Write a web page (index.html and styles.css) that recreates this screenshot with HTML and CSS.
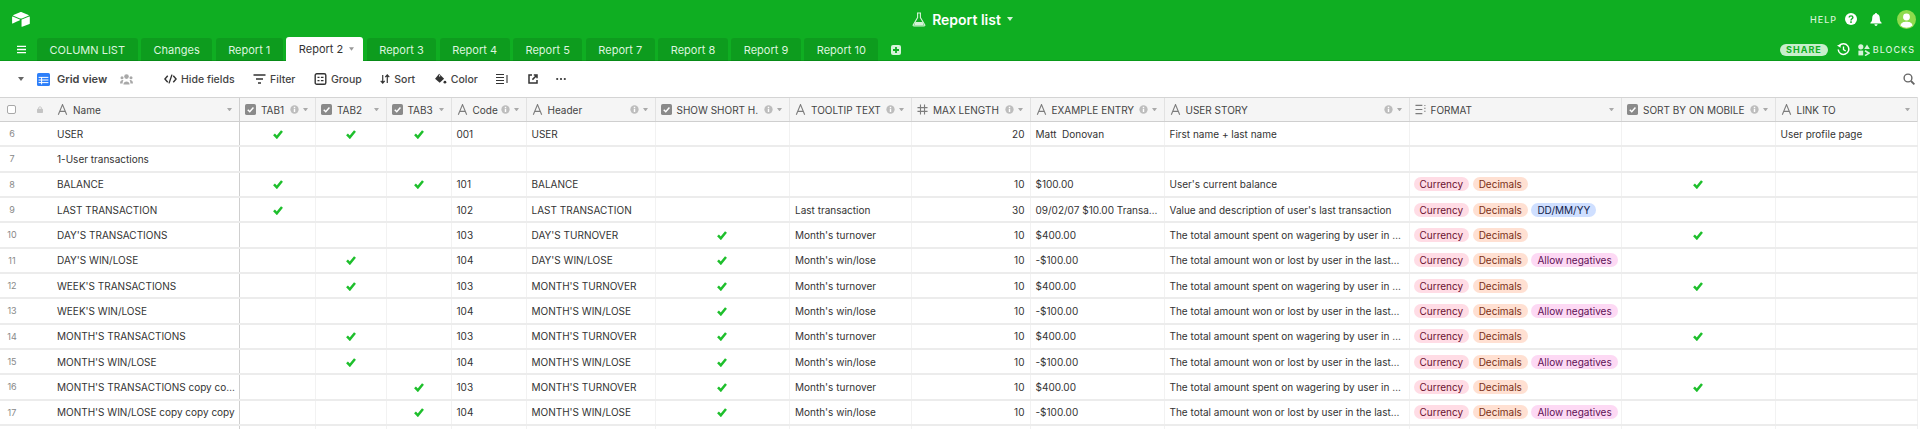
FILE: index.html
```html
<!DOCTYPE html>
<html lang="en">
<head>
    <meta charset="UTF-8">
    <title>Report list</title>
    <link rel="stylesheet" href="styles.css">
</head>
<body>
    <!-- shared icons -->
    <svg class="sprite" xmlns="http://www.w3.org/2000/svg">
        <symbol id="i-check" viewBox="0 0 12 12"><path d="M1.2 6.4 L4.6 10 L10.8 2.4" fill="none" stroke="currentColor" stroke-width="3"/></symbol>
        <symbol id="i-box" viewBox="0 0 12 12"><rect width="12" height="12" rx="2" fill="#8a8a8a"/><path d="M3 6.2 L5.2 8.4 L9.2 3.8" fill="none" stroke="#fff" stroke-width="1.6"/></symbol>
        <symbol id="i-a" viewBox="0 0 10 11"><path d="M.8 10.8 L5 .6 L9.2 10.8 M2.3 7.4 H7.7" fill="none" stroke="#7d7d7d" stroke-width="1.1"/></symbol>
        <symbol id="i-hash" viewBox="0 0 12 12"><path d="M3.8 .5 V11.5 M8.2 .5 V11.5 M.5 4 H11.5 M.5 8 H11.5" fill="none" stroke="#7d7d7d" stroke-width="1.2"/></symbol>
        <symbol id="i-list" viewBox="0 0 12 12"><path d="M.5 1.5 H8 M.5 6 H8 M.5 10.5 H8" fill="none" stroke="#7d7d7d" stroke-width="1.1"/><path d="M10 1 h1.5 v1 h-1.5 Z M10 4.2 h1.5 v1 h-1.5 Z M10 7.4 h1.5 v1 h-1.5 Z" fill="#7d7d7d"/></symbol>
        <symbol id="i-info" viewBox="0 0 10 10"><circle cx="5" cy="5" r="4.6" fill="#bdbdbd"/><rect x="4.2" y="4.2" width="1.6" height="3.6" fill="#fff"/><rect x="4.2" y="2" width="1.6" height="1.5" fill="#fff"/></symbol>
        <symbol id="i-caret" viewBox="0 0 6 4"><path d="M0 0 H6 L3 4 Z" fill="currentColor"/></symbol>
    </svg>

    <header class="topbar">
        <svg class="logo" viewBox="10 10 180 150"><path fill="#fff" d="M90 12.4 24.1 39.7c-3.7 1.5-3.6 6.7.1 8.2l66.2 26.2c5.8 2.3 12.3 2.3 18.1 0l66.3-26.2c3.7-1.5 3.7-6.7.1-8.2L108.9 12.4c-6-2.5-12.8-2.5-18.9 0"/><path fill="#fff" d="M105.3 88.5v65.6c0 3.1 3.1 5.2 6 4.1l73.9-28.6c1.7-.7 2.8-2.3 2.8-4.1V59.8c0-3.1-3.1-5.3-6-4.1l-73.9 28.6c-1.7.7-2.8 2.3-2.8 4.2"/><path fill="#fff" d="M88.1 91.8 66.2 102.4l-2.2 1.1-46.3 22.2c-2.9 1.4-6.7-.7-6.7-4V60.1c0-1.2.6-2.2 1.4-3 .3-.3.7-.6 1.1-.8 1.1-.7 2.7-.8 4-.3l70.2 27.8c3.5 1.4 3.8 6.4.4 8"/></svg>
        <div class="title">
            <svg class="flask" viewBox="0 0 14 15"><path d="M5 1 H9 M5.6 1 V5.5 L1.2 13 Q.9 14 2 14 H12 Q13.1 14 12.8 13 L8.4 5.5 V1" fill="none" stroke="#d6f3d9" stroke-width="1.1"/><path d="M3.4 10 H10.6 L12 13.4 H2 Z" fill="#d6f3d9"/></svg>
            <span>Report list</span>
            <svg class="caret-white"><use href="#i-caret"/></svg>
        </div>
        <div class="account">
            <span class="caps">HELP</span>
            <svg class="help" viewBox="0 0 12 12"><circle cx="6" cy="6" r="6" fill="#fff"/><path d="M4.2 4.6 C4.2 2.3 7.9 2.4 7.9 4.5 C7.9 5.8 6 5.8 6 7.4" fill="none" stroke="#0fae22" stroke-width="1.4"/><rect x="5.2" y="8.3" width="1.6" height="1.6" fill="#0fae22"/></svg>
            <svg class="bell" viewBox="0 0 12 13"><path fill="#fff" d="M6 0 C6.7 0 7 .5 7 1 C9 1.5 9.8 3.2 9.8 5.2 C9.8 7.8 10.6 8.8 11.6 9.8 V10.6 H.4 V9.8 C1.4 8.8 2.2 7.8 2.2 5.2 C2.2 3.2 3 1.5 5 1 C5 .5 5.3 0 6 0 Z M4.4 11.3 H7.6 C7.4 12.4 6.8 13 6 13 C5.2 13 4.6 12.4 4.4 11.3 Z"/></svg>
            <svg class="avatar" viewBox="0 0 20 20"><circle cx="10" cy="10" r="10" fill="#8edb4c"/><circle cx="10" cy="7.4" r="3.6" fill="#fff"/><path fill="#fff" d="M3.6 16.4 C4.4 13 7 12.4 10 12.4 C13 12.4 15.6 13 16.4 16.4 A10 10 0 0 1 3.6 16.4 Z"/></svg>
        </div>
    </header>

    <nav class="tabbar">
        <svg class="menu" viewBox="0 0 10 9"><path d="M0 1 H10 M0 4.5 H10 M0 8 H10" stroke="#fff" stroke-width="1.4"/></svg>
        <a class="tab">COLUMN LIST</a>
        <a class="tab">Changes</a>
        <a class="tab">Report 1</a>
        <a class="tab active">Report 2 <svg class="caret-tab"><use href="#i-caret"/></svg></a>
        <a class="tab">Report 3</a>
        <a class="tab">Report 4</a>
        <a class="tab">Report 5</a>
        <a class="tab">Report 7</a>
        <a class="tab">Report 8</a>
        <a class="tab">Report 9</a>
        <a class="tab">Report 10</a>
        <svg class="add" viewBox="0 0 10 10"><rect width="10" height="10" rx="2" fill="#d6f3d9"/><path d="M5 2 V8 M2 5 H8" stroke="#0fae22" stroke-width="1.8"/></svg>
        <div class="tab-tools">
            <span class="share">SHARE</span>
            <svg class="history" viewBox="0 0 14 14"><path d="M2.4 3.2 A5.7 5.7 0 1 1 1.3 7" fill="none" stroke="#fff" stroke-width="1.6"/><path d="M0 2.6 L3.8 1.4 L3.9 5.2 Z" fill="#fff"/><path d="M7 3.8 V7.2 L9.4 8.6" fill="none" stroke="#fff" stroke-width="1.4"/></svg>
            <svg class="blocks" viewBox="0 0 12 12"><circle cx="2.8" cy="2.8" r="2.6" fill="#d6f3d9"/><path d="M9 .4 L11.8 5 H6.2 Z" fill="#d6f3d9"/><rect x=".4" y="6.6" width="4.8" height="4.8" fill="#d6f3d9"/><path d="M7 6.8 L11 9.2 L7 11.6" fill="none" stroke="#d6f3d9" stroke-width="1.6"/></svg>
            <span class="caps">BLOCKS</span>
        </div>
    </nav>

    <div class="toolbar">
        <svg class="view-caret"><use href="#i-caret"/></svg>
        <svg class="grid-icon" viewBox="0 0 13 13"><rect width="13" height="13" rx="1.6" fill="#2d7ff9"/><path d="M1.6 4.4 H11.4 M1.6 7 H11.4 M1.6 9.6 H11.4 M4.6 4 V11.4" stroke="#fff" stroke-width="1"/></svg>
        <b class="view-name">Grid view</b>
        <svg class="people" viewBox="0 0 13 11"><g fill="#a8a8a8"><circle cx="6.5" cy="2.6" r="2.3"/><circle cx="2" cy="3.8" r="1.5"/><circle cx="11" cy="3.8" r="1.5"/><path d="M3.4 10.6 C3.4 6.4 9.6 6.4 9.6 10.6 Z"/><path d="M0 9.4 C0 6.4 2.4 5.8 3.4 6.2 C2.8 7.2 2.6 8.2 2.6 9.4 Z M13 9.4 C13 6.4 10.6 5.8 9.6 6.2 C10.2 7.2 10.4 8.2 10.4 9.4 Z"/></g></svg>
        <div class="actions">
            <span class="action"><svg class="act-icon wide" viewBox="0 0 14 11"><path d="M4 2 L1 5.5 L4 9 M10 2 L13 5.5 L10 9 M8.6 .8 L5.4 10.2" fill="none" stroke="#333" stroke-width="1.5"/></svg>Hide fields</span>
            <span class="action"><svg class="act-icon wide" viewBox="0 0 13 10"><path d="M.5 1 H12.5 M3 5 H10 M5 9 H8" stroke="#333" stroke-width="1.7"/></svg>Filter</span>
            <span class="action"><svg class="act-icon wide" viewBox="0 0 12 12"><rect x=".7" y=".7" width="10.6" height="10.6" rx="1.6" fill="none" stroke="#333" stroke-width="1.4"/><path d="M3 4.4 H5 M6.4 4.4 H9 M3 7.6 H5 M6.4 7.6 H9" stroke="#333" stroke-width="1.4"/></svg>Group</span>
            <span class="action"><svg class="act-icon" viewBox="0 0 11 11"><path d="M3 1 V10 M.8 7.6 L3 10 L5.2 7.6 M8 10 V1 M5.8 3.4 L8 1 L10.2 3.4" fill="none" stroke="#333" stroke-width="1.3"/></svg>Sort</span>
            <span class="action"><svg class="act-icon wide" viewBox="0 0 13 13"><path d="M5 .8 L10.4 6.2 L5.6 10.6 L.6 6.2 Z" fill="#333"/><path d="M5.6 2 V4" stroke="#fff" stroke-width="1"/><circle cx="11.3" cy="10" r="1.5" fill="#333"/></svg>Color</span>
            <span class="action"><svg class="act-icon wide" viewBox="0 0 13 11"><path d="M0 1 H8 M0 4 H8 M0 7 H8 M0 10 H8 M11 1.5 V9.5" stroke="#333" stroke-width="1.1"/></svg></span>
            <span class="action"><svg class="act-icon" viewBox="0 0 10 10"><path d="M4 1 H1 V9 H9 V6" fill="none" stroke="#333" stroke-width="1.5"/><path d="M4.4 5.6 L8 2 M5.8 1 H9 V4.2" fill="none" stroke="#333" stroke-width="1.5"/></svg></span>
            <span class="action"><svg class="act-icon" viewBox="0 0 10 3"><circle cx="1.2" cy="1.5" r="1.1" fill="#333"/><circle cx="5" cy="1.5" r="1.1" fill="#333"/><circle cx="8.8" cy="1.5" r="1.1" fill="#333"/></svg></span>
        </div>
        <svg class="search" viewBox="0 0 12 12"><circle cx="5" cy="5" r="3.9" fill="none" stroke="#666" stroke-width="1.4"/><path d="M8 8 L11.4 11.4" stroke="#666" stroke-width="1.8"/></svg>
    </div>

    <div class="row head">
        <div class="cell name"><span class="tick-box"></span><svg class="lock" viewBox="0 0 7 8"><rect y="3.2" width="7" height="4.8" rx=".8" fill="#c4c4c4"/><path d="M1.8 3.4 V2.2 C1.8 .4 5.2 .4 5.2 2.2 V3.4" fill="none" stroke="#c4c4c4"/></svg><svg class="type"><use href="#i-a"/></svg><span class="label">Name</span><svg class="caret"><use href="#i-caret"/></svg></div>
        <div class="cell"><svg class="type"><use href="#i-box"/></svg><span class="label">TAB1</span><svg class="info"><use href="#i-info"/></svg><svg class="caret"><use href="#i-caret"/></svg></div>
        <div class="cell"><svg class="type"><use href="#i-box"/></svg><span class="label">TAB2</span><svg class="caret"><use href="#i-caret"/></svg></div>
        <div class="cell"><svg class="type"><use href="#i-box"/></svg><span class="label">TAB3</span><svg class="caret"><use href="#i-caret"/></svg></div>
        <div class="cell"><svg class="type"><use href="#i-a"/></svg><span class="label">Code</span><svg class="info"><use href="#i-info"/></svg><svg class="caret"><use href="#i-caret"/></svg></div>
        <div class="cell"><svg class="type"><use href="#i-a"/></svg><span class="label">Header</span><svg class="info"><use href="#i-info"/></svg><svg class="caret"><use href="#i-caret"/></svg></div>
        <div class="cell"><svg class="type"><use href="#i-box"/></svg><span class="label">SHOW SHORT H.</span><svg class="info"><use href="#i-info"/></svg><svg class="caret"><use href="#i-caret"/></svg></div>
        <div class="cell"><svg class="type"><use href="#i-a"/></svg><span class="label">TOOLTIP TEXT</span><svg class="info"><use href="#i-info"/></svg><svg class="caret"><use href="#i-caret"/></svg></div>
        <div class="cell"><svg class="type"><use href="#i-hash"/></svg><span class="label">MAX LENGTH</span><svg class="info"><use href="#i-info"/></svg><svg class="caret"><use href="#i-caret"/></svg></div>
        <div class="cell"><svg class="type"><use href="#i-a"/></svg><span class="label">EXAMPLE ENTRY</span><svg class="info"><use href="#i-info"/></svg><svg class="caret"><use href="#i-caret"/></svg></div>
        <div class="cell"><svg class="type"><use href="#i-a"/></svg><span class="label">USER STORY</span><svg class="info"><use href="#i-info"/></svg><svg class="caret"><use href="#i-caret"/></svg></div>
        <div class="cell"><svg class="type"><use href="#i-list"/></svg><span class="label">FORMAT</span><svg class="caret"><use href="#i-caret"/></svg></div>
        <div class="cell"><svg class="type"><use href="#i-box"/></svg><span class="label">SORT BY ON MOBILE</span><svg class="info"><use href="#i-info"/></svg><svg class="caret"><use href="#i-caret"/></svg></div>
        <div class="cell"><svg class="type"><use href="#i-a"/></svg><span class="label">LINK TO</span><svg class="caret"><use href="#i-caret"/></svg></div>
    </div>

    <div class="row">
        <div class="cell name"><span class="num">6</span><span>USER</span></div>
        <div class="cell mid"><svg class="check"><use href="#i-check"/></svg></div><div class="cell mid"><svg class="check"><use href="#i-check"/></svg></div><div class="cell mid"><svg class="check"><use href="#i-check"/></svg></div>
        <div class="cell"><span>001</span></div>
        <div class="cell"><span>USER</span></div>
        <div class="cell mid"></div>
        <div class="cell"></div>
        <div class="cell end">20</div>
        <div class="cell"><span>Matt&nbsp; Donovan</span></div>
        <div class="cell"><span>First name + last name</span></div>
        <div class="cell"></div>
        <div class="cell mid"></div>
        <div class="cell"><span>User profile page</span></div>
    </div>
    <div class="row">
        <div class="cell name"><span class="num">7</span><span>1-User transactions</span></div>
        <div class="cell"></div><div class="cell"></div><div class="cell"></div><div class="cell"></div><div class="cell"></div><div class="cell"></div><div class="cell"></div><div class="cell"></div><div class="cell"></div><div class="cell"></div><div class="cell"></div><div class="cell"></div><div class="cell"></div>
    </div>
    <div class="row">
        <div class="cell name"><span class="num">8</span><span>BALANCE</span></div>
        <div class="cell mid"><svg class="check"><use href="#i-check"/></svg></div><div class="cell mid"></div><div class="cell mid"><svg class="check"><use href="#i-check"/></svg></div>
        <div class="cell"><span>101</span></div>
        <div class="cell"><span>BALANCE</span></div>
        <div class="cell mid"></div>
        <div class="cell"></div>
        <div class="cell end">10</div>
        <div class="cell"><span>$100.00</span></div>
        <div class="cell"><span>User's current balance</span></div>
        <div class="cell"><span class="pill cur">Currency</span><span class="pill dec">Decimals</span></div>
        <div class="cell mid"><svg class="check"><use href="#i-check"/></svg></div>
        <div class="cell"></div>
    </div>
    <div class="row">
        <div class="cell name"><span class="num">9</span><span>LAST TRANSACTION</span></div>
        <div class="cell mid"><svg class="check"><use href="#i-check"/></svg></div><div class="cell mid"></div><div class="cell mid"></div>
        <div class="cell"><span>102</span></div>
        <div class="cell"><span>LAST TRANSACTION</span></div>
        <div class="cell mid"></div>
        <div class="cell"><span>Last transaction</span></div>
        <div class="cell end">30</div>
        <div class="cell"><span>09/02/07 $10.00 Transa…</span></div>
        <div class="cell"><span>Value and description of user's last transaction</span></div>
        <div class="cell"><span class="pill cur">Currency</span><span class="pill dec">Decimals</span><span class="pill date">DD/MM/YY</span></div>
        <div class="cell mid"></div>
        <div class="cell"></div>
    </div>
    <div class="row">
        <div class="cell name"><span class="num">10</span><span>DAY'S TRANSACTIONS</span></div>
        <div class="cell mid"></div><div class="cell mid"></div><div class="cell mid"></div>
        <div class="cell"><span>103</span></div>
        <div class="cell"><span>DAY'S TURNOVER</span></div>
        <div class="cell mid"><svg class="check"><use href="#i-check"/></svg></div>
        <div class="cell"><span>Month's turnover</span></div>
        <div class="cell end">10</div>
        <div class="cell"><span>$400.00</span></div>
        <div class="cell"><span>The total amount spent on wagering by user in …</span></div>
        <div class="cell"><span class="pill cur">Currency</span><span class="pill dec">Decimals</span></div>
        <div class="cell mid"><svg class="check"><use href="#i-check"/></svg></div>
        <div class="cell"></div>
    </div>
    <div class="row">
        <div class="cell name"><span class="num">11</span><span>DAY'S WIN/LOSE</span></div>
        <div class="cell mid"></div><div class="cell mid"><svg class="check"><use href="#i-check"/></svg></div><div class="cell mid"></div>
        <div class="cell"><span>104</span></div>
        <div class="cell"><span>DAY'S WIN/LOSE</span></div>
        <div class="cell mid"><svg class="check"><use href="#i-check"/></svg></div>
        <div class="cell"><span>Month's win/lose</span></div>
        <div class="cell end">10</div>
        <div class="cell"><span>-$100.00</span></div>
        <div class="cell"><span>The total amount won or lost by user in the last…</span></div>
        <div class="cell"><span class="pill cur">Currency</span><span class="pill dec">Decimals</span><span class="pill neg">Allow negatives</span></div>
        <div class="cell mid"></div>
        <div class="cell"></div>
    </div>
    <div class="row">
        <div class="cell name"><span class="num">12</span><span>WEEK'S TRANSACTIONS</span></div>
        <div class="cell mid"></div><div class="cell mid"><svg class="check"><use href="#i-check"/></svg></div><div class="cell mid"></div>
        <div class="cell"><span>103</span></div>
        <div class="cell"><span>MONTH'S TURNOVER</span></div>
        <div class="cell mid"><svg class="check"><use href="#i-check"/></svg></div>
        <div class="cell"><span>Month's turnover</span></div>
        <div class="cell end">10</div>
        <div class="cell"><span>$400.00</span></div>
        <div class="cell"><span>The total amount spent on wagering by user in …</span></div>
        <div class="cell"><span class="pill cur">Currency</span><span class="pill dec">Decimals</span></div>
        <div class="cell mid"><svg class="check"><use href="#i-check"/></svg></div>
        <div class="cell"></div>
    </div>
    <div class="row">
        <div class="cell name"><span class="num">13</span><span>WEEK'S WIN/LOSE</span></div>
        <div class="cell mid"></div><div class="cell mid"></div><div class="cell mid"></div>
        <div class="cell"><span>104</span></div>
        <div class="cell"><span>MONTH'S WIN/LOSE</span></div>
        <div class="cell mid"><svg class="check"><use href="#i-check"/></svg></div>
        <div class="cell"><span>Month's win/lose</span></div>
        <div class="cell end">10</div>
        <div class="cell"><span>-$100.00</span></div>
        <div class="cell"><span>The total amount won or lost by user in the last…</span></div>
        <div class="cell"><span class="pill cur">Currency</span><span class="pill dec">Decimals</span><span class="pill neg">Allow negatives</span></div>
        <div class="cell mid"></div>
        <div class="cell"></div>
    </div>
    <div class="row">
        <div class="cell name"><span class="num">14</span><span>MONTH'S TRANSACTIONS</span></div>
        <div class="cell mid"></div><div class="cell mid"><svg class="check"><use href="#i-check"/></svg></div><div class="cell mid"></div>
        <div class="cell"><span>103</span></div>
        <div class="cell"><span>MONTH'S TURNOVER</span></div>
        <div class="cell mid"><svg class="check"><use href="#i-check"/></svg></div>
        <div class="cell"><span>Month's turnover</span></div>
        <div class="cell end">10</div>
        <div class="cell"><span>$400.00</span></div>
        <div class="cell"><span>The total amount spent on wagering by user in …</span></div>
        <div class="cell"><span class="pill cur">Currency</span><span class="pill dec">Decimals</span></div>
        <div class="cell mid"><svg class="check"><use href="#i-check"/></svg></div>
        <div class="cell"></div>
    </div>
    <div class="row">
        <div class="cell name"><span class="num">15</span><span>MONTH'S WIN/LOSE</span></div>
        <div class="cell mid"></div><div class="cell mid"><svg class="check"><use href="#i-check"/></svg></div><div class="cell mid"></div>
        <div class="cell"><span>104</span></div>
        <div class="cell"><span>MONTH'S WIN/LOSE</span></div>
        <div class="cell mid"><svg class="check"><use href="#i-check"/></svg></div>
        <div class="cell"><span>Month's win/lose</span></div>
        <div class="cell end">10</div>
        <div class="cell"><span>-$100.00</span></div>
        <div class="cell"><span>The total amount won or lost by user in the last…</span></div>
        <div class="cell"><span class="pill cur">Currency</span><span class="pill dec">Decimals</span><span class="pill neg">Allow negatives</span></div>
        <div class="cell mid"></div>
        <div class="cell"></div>
    </div>
    <div class="row">
        <div class="cell name"><span class="num">16</span><span>MONTH'S TRANSACTIONS copy co…</span></div>
        <div class="cell mid"></div><div class="cell mid"></div><div class="cell mid"><svg class="check"><use href="#i-check"/></svg></div>
        <div class="cell"><span>103</span></div>
        <div class="cell"><span>MONTH'S TURNOVER</span></div>
        <div class="cell mid"><svg class="check"><use href="#i-check"/></svg></div>
        <div class="cell"><span>Month's turnover</span></div>
        <div class="cell end">10</div>
        <div class="cell"><span>$400.00</span></div>
        <div class="cell"><span>The total amount spent on wagering by user in …</span></div>
        <div class="cell"><span class="pill cur">Currency</span><span class="pill dec">Decimals</span></div>
        <div class="cell mid"><svg class="check"><use href="#i-check"/></svg></div>
        <div class="cell"></div>
    </div>
    <div class="row">
        <div class="cell name"><span class="num">17</span><span>MONTH'S WIN/LOSE copy copy copy</span></div>
        <div class="cell mid"></div><div class="cell mid"></div><div class="cell mid"><svg class="check"><use href="#i-check"/></svg></div>
        <div class="cell"><span>104</span></div>
        <div class="cell"><span>MONTH'S WIN/LOSE</span></div>
        <div class="cell mid"><svg class="check"><use href="#i-check"/></svg></div>
        <div class="cell"><span>Month's win/lose</span></div>
        <div class="cell end">10</div>
        <div class="cell"><span>-$100.00</span></div>
        <div class="cell"><span>The total amount won or lost by user in the last…</span></div>
        <div class="cell"><span class="pill cur">Currency</span><span class="pill dec">Decimals</span><span class="pill neg">Allow negatives</span></div>
        <div class="cell mid"></div>
        <div class="cell"></div>
    </div>
    <div class="row tail">
        <div class="cell name"></div>
        <div class="cell"></div><div class="cell"></div><div class="cell"></div><div class="cell"></div><div class="cell"></div><div class="cell"></div><div class="cell"></div><div class="cell"></div><div class="cell"></div><div class="cell"></div><div class="cell"></div><div class="cell"></div><div class="cell"></div>
    </div>
</body>
</html>
```

FILE: styles.css
```css
html, body {
    height: 100%;
    overflow: hidden;
}
body {
    margin: 0;
    background-color: white;
    color: #333;
    font-family: Inter, "Liberation Sans", sans-serif;
    font-size: 10px;
}
.sprite {
    display: none;
}
svg {
    display: block;
    flex: none;
}

/* green header */
.topbar {
    display: grid;
    grid-template-columns: 1fr auto 1fr;
    align-items: center;
    height: 38px;
    background-color: #0fae22;
    color: white;
}
.logo {
    width: 18px;
    height: 15px;
    margin-left: 12px;
}
.title {
    display: flex;
    align-items: center;
    gap: 6px;
    padding-left: 5px;
    font-size: 14px;
    font-weight: 600;
}
.flask {
    width: 14px;
    height: 15px;
}
.caret-white {
    width: 6px;
    height: 4px;
    color: #d6f3d9;
}
.account {
    display: flex;
    align-items: center;
    justify-content: flex-end;
    gap: 8px;
    padding-right: 4px;
}
.caps {
    font-size: 9px;
    font-weight: 500;
    letter-spacing: 1px;
    color: #d6f3d9;
}
.help {
    width: 12px;
    height: 12px;
    margin-right: 5px;
}
.bell {
    width: 12px;
    height: 13px;
    margin-right: 7px;
}
.avatar {
    width: 19px;
    height: 19px;
}
.tabbar {
    display: flex;
    align-items: flex-end;
    height: 23px;
    background-color: #0fae22;
    box-shadow: inset 0 -1px 0 #0a9a1a;
    padding-left: 17px;
}
.menu {
    width: 9px;
    height: 9px;
    margin: 0 11px 7px 0;
}
.tab {
    display: flex;
    align-items: center;
    height: 23px;
    margin-right: 3.5px;
    padding: 0 12.5px;
    border-radius: 3px 3px 0 0;
    background-color: rgba(0, 0, 0, 0.1);
    color: #dcf5df;
    font-size: 11px;
}
.tab.active {
    background-color: white;
    color: #333;
    gap: 6px;
    height: 24px;
    padding-right: 9px;
}
.caret-tab {
    width: 5px;
    height: 4px;
    color: #999;
}
.add {
    width: 10px;
    height: 10px;
    margin: 0 0 6px 9px;
}
.tab-tools {
    display: flex;
    align-items: center;
    margin-left: auto;
    height: 23px;
    padding-right: 5px;
}
.share {
    padding: 0 6px;
    height: 12px;
    line-height: 12px;
    border-radius: 6px;
    background-color: #c8eecc;
    color: #0fae22;
    font-size: 9px;
    font-weight: 700;
    letter-spacing: 1px;
}
.history {
    width: 13px;
    height: 13px;
    margin: 0 8px 0 9px;
}
.blocks {
    width: 12px;
    height: 12px;
    margin-right: 3px;
}

/* view toolbar */
.toolbar {
    display: flex;
    align-items: center;
    height: 36px;
    padding-left: 18px;
    font-size: 10.5px;
    font-weight: 500;
    color: #444;
}
.view-caret {
    width: 6px;
    height: 4px;
    color: #666;
    margin-right: 13px;
}
.grid-icon {
    width: 13px;
    height: 13px;
    margin-right: 7px;
}
.view-name {
    width: 50px;
    font-size: 11px;
    font-weight: 600;
    white-space: nowrap;
}
.people {
    width: 13px;
    height: 11px;
    margin: 0 31px 0 13px;
}
.actions {
    display: flex;
    align-items: center;
    gap: 18.5px;
}
.action {
    display: flex;
    align-items: center;
    gap: 4px;
}
.act-icon {
    width: 10px;
    height: 10px;
}
.act-icon.wide {
    width: 13px;
    height: 12px;
}
.search {
    width: 12px;
    height: 12px;
    margin-left: auto;
    margin-right: 5px;
}

/* grid */
.row {
    display: grid;
    grid-template-columns: 240px 76px 70.5px 65px 75px 129px 134.5px 122px 118.5px 134px 245px 212.5px 153.5px 142px;
    box-sizing: border-box;
    width: 1918px;
    height: 25.33px;
    border-bottom: 2px solid #ececec;
    border-right: 1px solid #ececec;
}
.row.head {
    height: 25px;
    background-color: #f5f5f5;
    border-top: 1px solid #d4d4d4;
    border-bottom: 1px solid #cfcfcf;
    color: #444;
}
.row.tail {
    height: 3px;
    border-bottom: none;
}
.cell {
    display: flex;
    align-items: center;
    min-width: 0;
    padding: 0 5px;
    border-right: 1px solid #f2f2f2;
    box-sizing: border-box;
    white-space: nowrap;
}
.head .cell {
    border-right-color: #e2e2e2;
    padding-right: 7px;
}
.cell.name {
    padding: 0 4px 0 0;
    border-right-color: #cfcfcf;
}
.head .cell.name {
    border-right-color: #cfcfcf;
    padding: 0 7px 0 7px;
}
.cell.mid {
    justify-content: center;
}
.cell.end {
    justify-content: flex-end;
}
.num {
    flex: none;
    width: 24px;
    margin-right: 33px;
    text-align: center;
    font-size: 9px;
    color: #888;
}
.check {
    width: 10px;
    height: 10px;
    color: #1ebf2c;
}
.type {
    width: 11px;
    height: 11px;
    margin-right: 5px;
}
.label {
    font-size: 10px;
}
.caret {
    width: 5px;
    height: 3.5px;
    margin-left: 4px;
    color: #aaa;
}
.label + .caret {
    margin-left: auto;
}
.info {
    width: 9px;
    height: 9px;
    margin-left: auto;
}
.tick-box {
    flex: none;
    box-sizing: border-box;
    width: 9px;
    height: 9px;
    border: 1px solid #a8a8a8;
    border-radius: 2px;
    background-color: white;
}
.lock {
    width: 6px;
    height: 7px;
    margin: 0 14px 0 21px;
}
.pill {
    flex: none;
    height: 14px;
    line-height: 14px;
    margin-right: 3.5px;
    padding: 0 6px;
    border-radius: 7px;
}
.cell:has(.pill) {
    padding-left: 4px;
}
.cur {
    background-color: #ffdce5;
    color: #6b1030;
}
.dec {
    background-color: #ffe0d2;
    color: #7a2e15;
}
.neg {
    background-color: #fdd9f4;
    color: #5e1055;
}
.date {
    background-color: #cfdfff;
    color: #102046;
}
```
